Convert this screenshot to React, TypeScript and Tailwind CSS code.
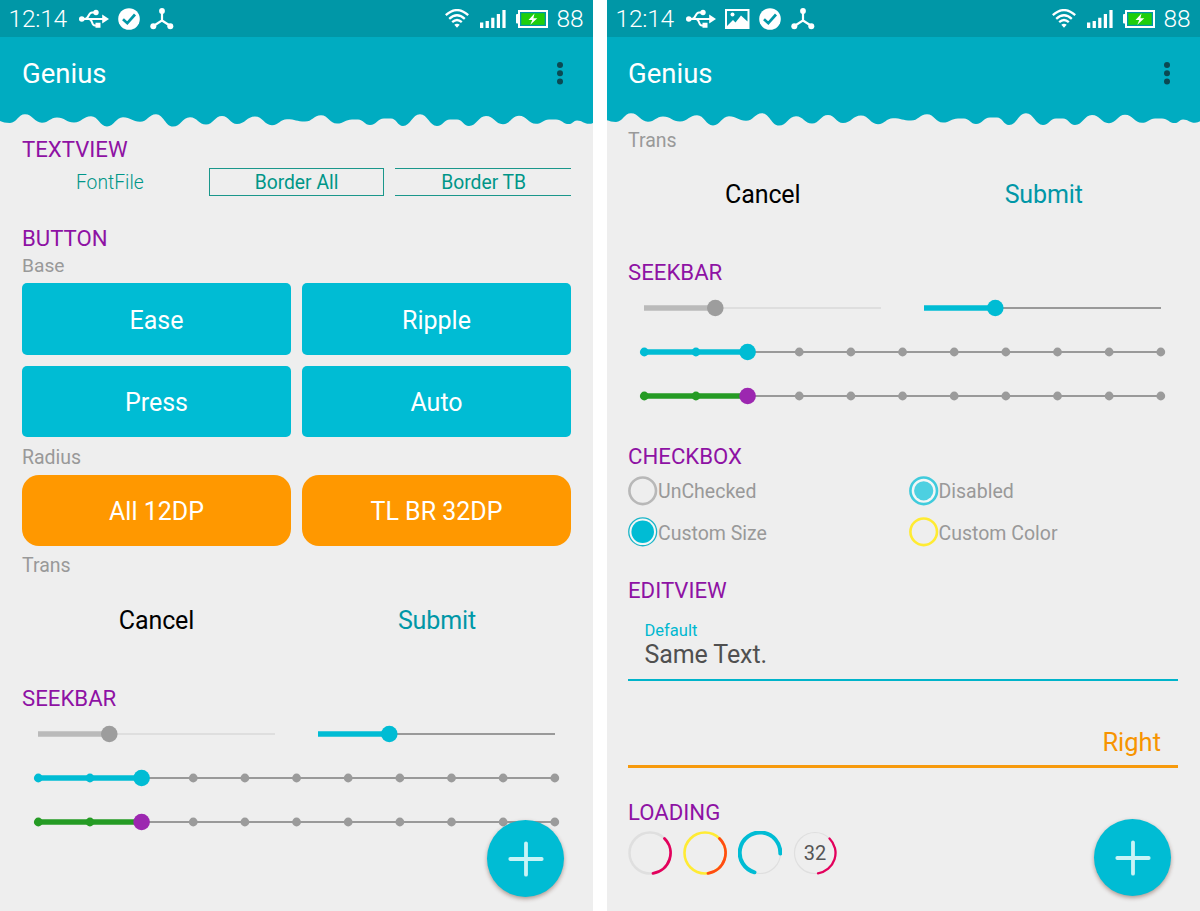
import type { ReactNode } from 'react';

const WAVE: [number, number][] = [
  [-10, 119], [10, 123], [25, 114.3], [42, 122.7], [57, 117.5], [74, 122.5], [91, 116.3], [107, 126.4],
  [123, 117.3], [140, 121.8], [156, 114.2], [173, 126.6], [190, 117.2], [206, 124.5], [222, 116], [237, 124],
  [255, 116.5], [272, 125.2], [287, 119.3], [305, 121.6], [321, 115.2], [337, 123.6], [352, 119.4], [358, 119.4],
  [370, 125], [384, 118.5], [391, 118.5], [403, 126], [420, 114.3], [437, 126], [450, 119.4], [457, 119.4],
  [469, 126], [486, 116], [503, 124.2], [519, 115.8], [536, 123.8], [549, 119.4], [556, 119.4], [569, 124],
  [577, 120.4], [589, 123.8], [602, 119],
];

const WAVE_PATH =
  'M-10 100 L-10 119 ' +
  WAVE.slice(1)
    .map(([x, y], i) => {
      const [px, py] = WAVE[i];
      const d = (x - px) * 0.45;
      return `C${px + d} ${py} ${x - d} ${y} ${x} ${y}`;
    })
    .join(' ') +
  ' L602 100 Z';

function UsbIcon() {
  return (
    <svg width="30" height="20" viewBox="0 0 30 20" fill="none" stroke="#fff" strokeWidth="2">
      <path d="M3 10H25M6 10C10 10 9 3.5 13 3.5H16M10 10C14 10 12 16.500 16 16.500H19" />
      <circle cx="2.800" cy="10" r="2.800" fill="#fff" stroke="none" />
      <circle cx="17" cy="3.500" r="2.700" fill="#fff" stroke="none" />
      <path d="M16.500 13.800h5v5h-5zM23.200 5.400L30 10l-6.800 4.600z" fill="#fff" stroke="none" />
    </svg>
  );
}

function PictureIcon() {
  return (
    <svg width="25" height="20" viewBox="0 0 25 20">
      <path fill="#fff" fillRule="evenodd" d="M0 0H24.500V20H0ZM2 2V17L8 11L10.500 13.500L16 6.500L22.500 12.500V2Z" />
      <circle cx="7.500" cy="5.500" r="2" fill="#fff" />
    </svg>
  );
}

function CheckIcon() {
  return (
    <svg width="22" height="22" viewBox="0 0 22 22">
      <circle cx="11" cy="11" r="10.800" fill="#fff" />
      <path d="M5 11.300L9.300 15.200L17 6.500" fill="none" stroke="#0097a7" strokeWidth="2.700" />
    </svg>
  );
}

function HubIcon() {
  return (
    <svg width="24" height="22" viewBox="0 0 24 22">
      <path d="M12 3V12.500L3.500 18M12 12.500L20.500 18" fill="none" stroke="#fff" strokeWidth="2.200" />
      <g fill="#fff">
        <circle cx="12" cy="3" r="2.900" />
        <circle cx="3.300" cy="18.200" r="3" />
        <circle cx="20.300" cy="18.200" r="3" />
      </g>
    </svg>
  );
}

function WifiIcon() {
  return (
    <svg width="24" height="19" viewBox="0 0 24 19" fill="none" stroke="#fff" strokeWidth="2.300">
      <path d="M.8 6.200Q12-4 23.200 6.200M4.200 9.800Q12 2.800 19.800 9.800M7.200 13.200Q12 8.800 16.800 13.200" />
      <path d="M9.300 15.800Q12 13.500 14.700 15.800L12 18.700Z" fill="#fff" stroke="none" />
    </svg>
  );
}

function SignalIcon() {
  return (
    <svg width="26" height="18" viewBox="0 0 26 18" fill="#fff">
      <path d="M0 12.500h3.300V18H0zM5.600 11h3.300v7H5.600zM11.200 7.800h3.200V18h-3.200zM16.800 4h3.200v14h-3.200zM22.400 0h3.200v18h-3.200z" />
    </svg>
  );
}

function BatteryIcon() {
  return (
    <svg width="32" height="18" viewBox="0 0 32 18">
      <rect x="0" y="4" width="3" height="9.500" rx="1" fill="#fff" />
      <rect x="3" y="1" width="28" height="16" fill="#0097a7" stroke="#fff" strokeWidth="2" />
      <rect x="5.300" y="3.200" width="23.400" height="11.600" fill="#1fce0c" />
      <path d="M18.500 3.500L12.500 9.900H16.300L14.300 14.800L21.300 8.200H17.400Z" fill="#fff" />
    </svg>
  );
}

function Header({ picture, shift, titlePad, lift }: { picture?: boolean; shift: number; titlePad: string; lift: number }) {
  return (
    <header className="w-full shrink-0">
      <div className="flex h-[37px] items-center justify-between bg-[#0097a7] pr-[9px] pl-[8.500px]">
        <div className="flex items-center">
          <span className="w-[70.500px] text-[24.500px] leading-[37px] font-light tracking-[-0.2px] text-white">12:14</span>
          <UsbIcon />
          {picture && <div className="ml-[9px]"><PictureIcon /></div>}
          <div className="ml-[9px]"><CheckIcon /></div>
          <div className="ml-[9.500px]"><HubIcon /></div>
        </div>
        <div className="flex items-center">
          <WifiIcon />
          <div className="ml-[11px]"><SignalIcon /></div>
          <div className="ml-[10px]"><BatteryIcon /></div>
          <span className="ml-[8.500px] w-[27.500px] text-[24.500px] leading-[37px] font-light text-white">88</span>
        </div>
      </div>
      <div className={`flex h-[73px] items-center justify-between bg-[#00acc1] pr-[28px] ${titlePad}`}>
        <h1 className="text-[27.500px] leading-[73px] text-white">Genius</h1>
        <svg className="mb-[2px]" width="10" height="24" viewBox="0 0 10 24" fill="#0b4952">
          <circle cx="5" cy="4" r="3" />
          <circle cx="5" cy="12.200" r="3" />
          <circle cx="5" cy="20.400" r="3" />
        </svg>
      </div>
      <svg className="block" width="593" height="17" viewBox={`${shift} ${110 + lift} 593 17`}>
        <path d={WAVE_PATH} fill="#00acc1" />
      </svg>
    </header>
  );
}

function Heading({ children }: { children: ReactNode }) {
  return <h2 className="h-[30px] text-[22.200px] leading-[28px] text-[#8e12a4]">{children}</h2>;
}

function TransButtons({ tall }: { tall?: boolean }) {
  return (
    <div className={`grid grid-cols-2 gap-x-[11px] text-[25px] tracking-[-0.1px] ${tall ? 'h-[80px] pt-[2px]' : 'h-[68px] pt-[3px]'}`}>
      <button className="text-black">Cancel</button>
      <button className="pl-px text-[#0097a7]">Submit</button>
    </div>
  );
}

function Slider({ color, rest, thumb }: { color: string; rest: string; thumb: string }) {
  return (
    <svg width="269" height="44" viewBox="0 0 269 44">
      <path d="M87 22H253" stroke={rest} strokeWidth="2" />
      <path d="M16 22H87" stroke={color} strokeWidth="5.500" />
      <circle cx="87.300" cy="22" r="8.300" fill={thumb} />
    </svg>
  );
}

function SteppedSlider({ color, thumb }: { color: string; thumb: string }) {
  const step = 51.65;
  return (
    <svg className="block" width="549" height="44" viewBox="0 0 549 44">
      <path d="M119 22H533" stroke="#999" strokeWidth="2" />
      <path d="M16 22H119" stroke={color} strokeWidth="5.500" />
      {Array.from({ length: 11 }, (_, i) => (
        <circle key={i} cx={16.300 + i * step} cy="22" r={i === 2 ? 8.300 : 4.400} fill={i < 2 ? color : i === 2 ? thumb : '#9b9b9b'} />
      ))}
    </svg>
  );
}

function SeekBars() {
  return (
    <div>
      <div className="flex h-[44px] gap-[11px]">
        <Slider color="#bababa" rest="#dedede" thumb="#9d9d9d" />
        <Slider color="#00bcd4" rest="#999" thumb="#00bcd4" />
      </div>
      <SteppedSlider color="#00bcd4" thumb="#00bcd4" />
      <SteppedSlider color="#259b24" thumb="#9c27b0" />
    </div>
  );
}

function Fab({ place }: { place: string }) {
  return (
    <button className={`absolute flex size-[77px] items-center justify-center rounded-full bg-[#00bcd4] shadow-[0_2px_4px_rgba(70,20,0,0.38)] ${place}`}>
      <svg width="36" height="36" viewBox="0 0 36 36" stroke="#c9f3f6" strokeWidth="3.800" strokeLinecap="round">
        <path d="M18 2.300V33.700M2.300 18H33.700" />
      </svg>
    </button>
  );
}

function SolidButton({ children }: { children: ReactNode }) {
  return <button className="h-[71.500px] rounded-[5px] bg-[#00bcd4] pt-[3px] text-[25px] text-white">{children}</button>;
}

function RoundButton({ children }: { children: ReactNode }) {
  return <button className="h-[71.500px] rounded-[17px] bg-[#ff9800] pt-[3px] text-[25px] text-white">{children}</button>;
}

function CheckOption({ ring, width, dot, dotSize, label }: { ring: string; width: number; dot?: string; dotSize?: number; label: string }) {
  return (
    <label className="flex items-center text-[19.500px] text-[#999]">
      <svg width="30" height="30" viewBox="0 0 30 30">
        <circle cx="14.700" cy="14.800" r={14.600 - width / 2} fill={dot ? '#f3f6f6' : 'none'} stroke={ring} strokeWidth={width} />
        {dot && <circle cx="14.700" cy="14.800" r={dotSize} fill={dot} />}
      </svg>
      <span className="pt-[2px]">{label}</span>
    </label>
  );
}

function Loader({ track, trackWidth, arc, arcWidth, d, label }: { track: string; trackWidth: number; arc: string; arcWidth: number; d: string; label?: string }) {
  return (
    <div className="relative size-[44px]">
      <svg width="44" height="44" viewBox="0 0 44 44" fill="none">
        <circle cx="22" cy="22" r="20.500" stroke={track} strokeWidth={trackWidth} />
        <path d={d} stroke={arc} strokeWidth={arcWidth} strokeLinecap="round" />
      </svg>
      {label && <span className="absolute inset-0 text-center text-[20px] leading-[45px] text-[#555]">{label}</span>}
    </div>
  );
}

const QUARTER = 'M36.5 7.5A20.500 20.500 0 0 1 25 42.300';

export default function App() {
  return (
    <div className="flex h-[911px] w-[1200px] justify-between overflow-hidden bg-white font-['Roboto',sans-serif]">
      <section className="relative flex h-[911px] w-[593px] flex-col overflow-hidden bg-[#eee]">
        <Header shift={0} lift={0} titlePad="pl-[22px]" />
        <main className="w-full pt-[8px] pr-[22px] pl-[22px]">
          <Heading>TEXTVIEW</Heading>
          <div className="mt-[3px] grid h-[27px] grid-cols-3 gap-x-[11px] text-center text-[19.300px] leading-[24px] text-[#009688]">
            <span className="pt-[3px] font-light">FontFile</span>
            <span className="border border-[#1a978b] pt-[2px]">Border All</span>
            <span className="border-y border-[#1a978b] pt-[2px] pl-px">Border TB</span>
          </div>
          <div className="mt-[29px]"><Heading>BUTTON</Heading></div>
          <p className="h-[29px] text-[19.200px] leading-[24px] text-[#999]">Base</p>
          <div className="grid grid-cols-2 gap-[11px]">
            <SolidButton>Ease</SolidButton>
            <SolidButton>Ripple</SolidButton>
            <SolidButton>Press</SolidButton>
            <SolidButton>Auto</SolidButton>
          </div>
          <p className="h-[37.500px] text-[19.500px] leading-[41px] text-[#999]">Radius</p>
          <div className="grid grid-cols-2 gap-[11px]">
            <RoundButton>All 12DP</RoundButton>
            <RoundButton>TL BR 32DP</RoundButton>
          </div>
          <p className="h-[39.500px] text-[19.500px] leading-[40px] text-[#999]">Trans</p>
          <TransButtons />
          <div className="mt-[30px] h-[28px]"><Heading>SEEKBAR</Heading></div>
          <SeekBars />
        </main>
        <Fab place="right-[29px] bottom-[14px]" />
      </section>

      <section className="relative flex h-[911px] w-[593px] flex-col overflow-hidden bg-[#eee]">
        <Header picture shift={1} lift={1} titlePad="pl-[21px]" />
        <main className="w-full pr-[22px] pl-[21px]">
          <p className="h-[27px] text-[19.500px] leading-[27px] text-[#999]">Trans</p>
          <TransButtons tall />
          <div className="mt-[23.500px] h-[28.500px]"><Heading>SEEKBAR</Heading></div>
          <div className="-mr-px pl-[0.400px]"><SeekBars /></div>
          <div className="mt-[23.500px] h-[28.500px]"><Heading>CHECKBOX</Heading></div>
          <div className="grid h-[83px] grid-cols-2 grid-rows-2 gap-x-[11px]">
            <CheckOption ring="#b8b8b8" width={2.600} label="UnChecked" />
            <CheckOption ring="#40cbdc" width={2.600} dot="#4dd0e1" dotSize={9.600} label="Disabled" />
            <CheckOption ring="#1bb5c8" width={1.300} dot="#00bcd4" dotSize={11.300} label="Custom Size" />
            <CheckOption ring="#ffeb32" width={2.600} label="Custom Color" />
          </div>
          <div className="mt-[23px]"><Heading>EDITVIEW</Heading></div>
          <div className="mt-[12.500px] flex h-[62px] flex-col border-b-2 border-[#00b4ca] pl-[16.500px]">
            <span className="text-[16.500px] leading-[23px] text-[#00b8d0]">Default</span>
            <span className="text-[25px] leading-[25px] tracking-[-0.1px] text-[#505050]">Same Text.</span>
          </div>
          <div className="h-[87.500px] border-b-[3px] border-[#f79a0c] pt-[46px] pr-[17px] text-right text-[25.500px] leading-[30px] text-[#f79400]">Right</div>
          <div className="mt-[29.500px]"><Heading>LOADING</Heading></div>
          <div className="mt-[3.500px] flex gap-[11px]">
            <Loader track="#dfdfdf" trackWidth={2.500} arc="#e3005c" arcWidth={2.800} d={QUARTER} />
            <Loader track="#ffeb34" trackWidth={2.600} arc="#ff4b14" arcWidth={2.800} d={QUARTER} />
            <Loader track="#dfdfdf" trackWidth={1.200} arc="#00bcd4" arcWidth={4} d="M42.300 22.500A20.300 20.300 0 1 0 16.500 41.300" />
            <Loader track="#dfdfdf" trackWidth={1.200} arc="#e3005c" arcWidth={2.300} d={QUARTER} label="32" />
          </div>
        </main>
        <Fab place="right-[29px] bottom-[15px]" />
      </section>
    </div>
  );
}
